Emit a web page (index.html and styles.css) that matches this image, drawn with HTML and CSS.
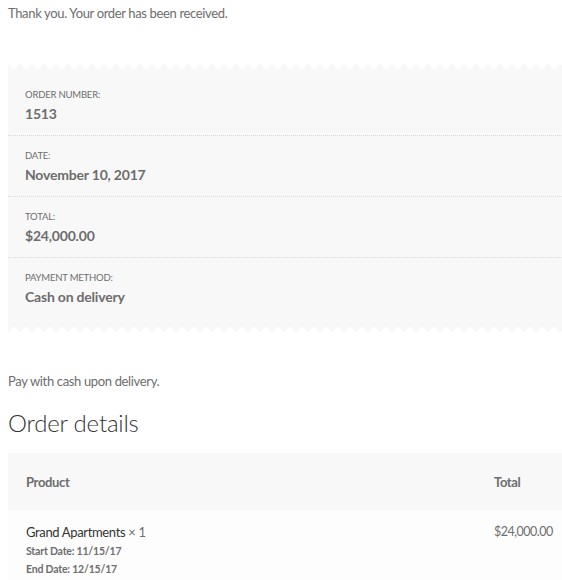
FILE: index.html
```html
<!DOCTYPE html>
<html>
<head>
<meta charset="utf-8">
<link rel="stylesheet" href="styles.css">
</head>
<body>
<div class="page">
  <p class="notice">Thank you. Your order has been received.</p>

  <div class="overview">
    <div class="zig zig-top"></div>
    <ul class="overview-list">
      <li class="overview-item">
        <span class="ov-label">Order number:</span>
        <strong class="ov-value">1513</strong>
      </li>
      <li class="overview-item">
        <span class="ov-label">Date:</span>
        <strong class="ov-value">November 10, 2017</strong>
      </li>
      <li class="overview-item">
        <span class="ov-label">Total:</span>
        <strong class="ov-value">$24,000.00</strong>
      </li>
      <li class="overview-item">
        <span class="ov-label">Payment method:</span>
        <strong class="ov-value">Cash on delivery</strong>
      </li>
    </ul>
    <div class="zig zig-bottom"></div>
  </div>

  <p class="pay-note">Pay with cash upon delivery.</p>

  <h2 class="section-title">Order details</h2>

  <div class="order-table">
    <div class="thead">
      <div class="th th-product">Product</div>
      <div class="th th-total">Total</div>
    </div>
    <div class="trow">
      <div class="td td-product">
        <div class="prod-name">Grand Apartments <span class="qty">× 1</span></div>
        <div class="meta"><span class="meta-key">Start Date:</span> 11/15/17</div>
        <div class="meta"><span class="meta-key">End Date:</span> 12/15/17</div>
      </div>
      <div class="td td-total">$24,000.00</div>
    </div>
  </div>
</div>
</body>
</html>
```

FILE: styles.css
```css
* { box-sizing: border-box; }
html, body { margin: 0; padding: 0; background: #fff; }
body {
  font-family: Lato, "Liberation Sans", sans-serif;
  color: #6d6d6d;
  font-size: 13px;
  letter-spacing: -0.35px;
  overflow: hidden;
}
.page {
  padding: 3px 0 0 8px;
  width: 562px;
}
.notice {
  margin: 0;
  line-height: 21px;
}
.overview {
  margin-top: 39px;
}
.zig {
  height: 6px;
  background-image:
    linear-gradient(45deg, #f8f8f8 50%, transparent 50%),
    linear-gradient(-45deg, #f8f8f8 50%, transparent 50%);
  background-size: 12px 12px;
  background-repeat: repeat-x;
  background-position: 0 0;
}
.zig-bottom { transform: scaleY(-1); }
.overview-list {
  list-style: none;
  margin: 0;
  padding: 6px 0 9px;
  background: #f8f8f8;
}
.overview-item {
  padding: 12px 17px 10px;
  border-bottom: 1px dotted #dcdcdc;
}
.overview-item:last-child { border-bottom: 0; }
.ov-label {
  display: block;
  font-size: 9.5px;
  line-height: 16px;
  letter-spacing: -0.2px;
  text-transform: uppercase;
}
.ov-value {
  display: block;
  font-size: 14px;
  line-height: 22px;
  font-weight: 700;
  letter-spacing: -0.2px;
}
.pay-note {
  margin: 38px 0 0;
  line-height: 21px;
}
.section-title {
  margin: 14px 0 0;
  font-size: 24px;
  line-height: 34px;
  font-weight: 300;
  letter-spacing: -0.2px;
  color: #333;
}
.order-table {
  margin-top: 13px;
}
.thead, .trow {
  display: grid;
  grid-template-columns: 1fr 68px;
}
.thead {
  background: #f8f8f8;
  height: 57px;
  align-items: center;
}
.th { font-weight: 700; }
.th-product, .td-product { padding-left: 18px; }
.trow {
  background: #fdfdfd;
  padding-top: 12px;
  height: 80px;
}
.prod-name {
  color: #333;
  line-height: 20px;
}
.qty { color: #6d6d6d; }
.meta {
  font-size: 10.5px;
  font-weight: 700;
  line-height: 18px;
  letter-spacing: -0.2px;
}
.td-total {
  line-height: 20px;
  white-space: nowrap;
  font-size: 12.5px;
  letter-spacing: -0.5px;
}
```
